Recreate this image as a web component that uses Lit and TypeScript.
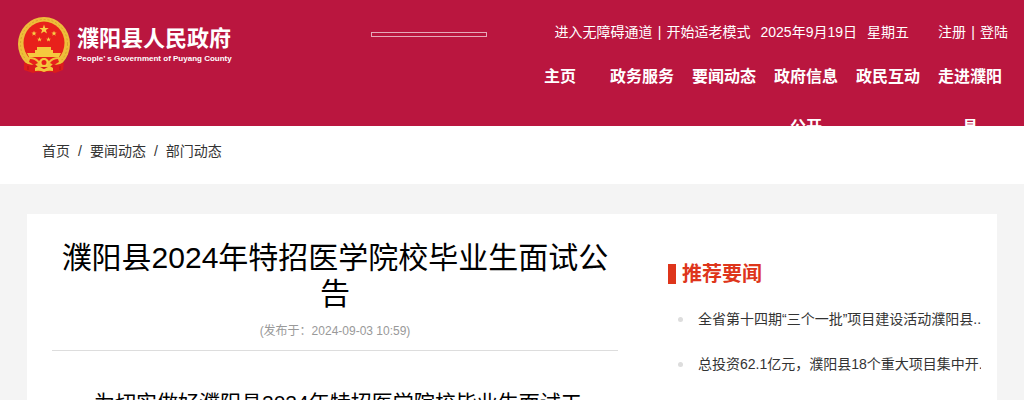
import { LitElement, html, css, svg } from "lit";
import { customElement, property } from "lit/decorators.js";

const STAR = "0,-10 2.4,-3.2 9.5,-3.1 3.8,1.2 5.9,8.1 0,4 -5.9,8.1 -3.8,1.2 -9.5,-3.1 -2.4,-3.2";
const star = (x: number, y: number, s: number) =>
  svg`<polygon points=${STAR} transform="translate(${x} ${y}) scale(${s})" fill="#f8d146"/>`;

@customElement("national-emblem")
export class NationalEmblem extends LitElement {
  static styles = css`
    :host { display: block; }
    svg { display: block; }
  `;
  render() {
    return html`<svg width="54" height="58" viewBox="0 0 54 58" aria-hidden="true">
      <ellipse cx="27" cy="28" rx="26" ry="27" fill="#eebd3a"/>
      <ellipse cx="27" cy="28" rx="23.5" ry="24.5" fill="none" stroke="#d9a02c" stroke-width="1" stroke-dasharray="2 2"/>
      <ellipse cx="27" cy="27" rx="20.5" ry="21.5" fill="#e8211b"/>
      ${star(27, 13.5, 0.5)}${star(17, 17.5, 0.28)}${star(37, 17.5, 0.28)}${star(22.5, 23.5, 0.26)}${star(31.5, 23.5, 0.26)}
      <path d="M20 31 H34 V34 H36 V37 H44 L42 41 H12 L10 37 H18 V34 H20 Z" fill="#f5c93e"/>
      <path d="M12 41 Q19 41 22 45 Q27 39 32 45 Q35 41 42 41 L46 46 L38 52 H16 L8 46 Z" fill="#f0c03a"/>
      <path d="M13 43 Q18 43 21 47 L17 49 L12 46 Z M41 43 Q36 43 33 47 L37 49 L42 46 Z" fill="#e8211b"/>
      <path d="M7 46 Q13 50 18 48 L21 51 H33 L36 48 Q41 50 47 46 L46 54 L38 57 L35 56 H19 L16 57 L7 54 Z" fill="#dc1c1c"/>
      <path d="M18 52 Q21 49 25 52 Q27 54 29 52 Q33 49 36 52 V55 Q31 54 27 56 Q23 54 18 55 Z" fill="#f3c53b"/>
      <circle cx="27" cy="46.500" r="3.500" fill="#e8211b" stroke="#f5c93e" stroke-width="2"/>
      <path d="M11 50 V54 M43 50 V54" stroke="#b81218" stroke-width="1"/>
    </svg>`;
  }
}

@customElement("site-header")
export class SiteHeader extends LitElement {
  static styles = css`
    :host { display: block; }
    .header {
      display: flex; box-sizing: border-box;
      height: 126px; overflow: hidden; background: #ba163f; color: #fff;
    }
    a { color: inherit; text-decoration: none; }
    .brand { display: flex; align-items: flex-start; gap: 6px; padding: 16px 0 0 17px; flex: none; }
    .brand-text { display: flex; flex-direction: column; padding-top: 9px; white-space: nowrap; }
    .name { font-size: 22px; line-height: 28px; font-weight: 700; }
    .english { font-size: 8px; line-height: 12px; font-weight: 700; }
    .search { margin: 0 32px 0 auto; padding-top: 32px; flex: none; }
    .search input {
      display: block; box-sizing: border-box; width: 116px; height: 5px; padding: 0;
      border: 1px solid #e6a9b9; background: transparent; color: #fff; font-size: 1px; outline: 0;
    }
    .right { flex: none; }
    .top { display: flex; justify-content: flex-end; padding: 22px 16px 0 0; font-size: 14px; line-height: 20px; white-space: nowrap; }
    .links, .date { display: flex; }
    .date { gap: 10px; padding: 0 29px 0 10px; }
    .bar { width: 14px; text-align: center; }
    nav { display: flex; padding: 10px 13px 0 0; font-size: 16px; line-height: 50px; font-weight: 700; text-align: center; }
    nav a { box-sizing: border-box; width: 82px; padding: 0 8px; }
  `;
  private items = ["主页", "政务服务", "要闻动态", "政府信息公开", "政民互动", "走进濮阳县"];
  render() {
    return html`<header class="header">
      <a class="brand" href="#">
        <national-emblem></national-emblem>
        <span class="brand-text">
          <span class="name">濮阳县人民政府</span>
          <span class="english">People’ s Government of Puyang County</span>
        </span>
      </a>
      <form class="search"><input type="text" aria-label="搜索" /></form>
      <div class="right">
        <div class="top">
          <span class="links"><a href="#">进入无障碍通道</a><span class="bar">|</span><a href="#">开始适老模式</a></span>
          <span class="date"><span>2025年9月19日</span><span>星期五</span></span>
          <span class="links"><a href="#">注册</a><span class="bar">|</span><a href="#">登陆</a></span>
        </div>
        <nav>${this.items.map((t) => html`<a href="#">${t}</a>`)}</nav>
      </div>
    </header>`;
  }
}

@customElement("news-list")
export class NewsList extends LitElement {
  static styles = css`
    :host { display: block; }
    h2 { display: flex; align-items: center; gap: 6px; margin: 0; color: #de351b; font-size: 20px; line-height: 30px; }
    h2::before { content: ""; width: 8px; height: 20px; background: #de351b; }
    ul { list-style: none; margin: 8px 0 0; padding: 0 0 0 10px; }
    li { display: flex; align-items: center; gap: 15px; height: 45px; }
    li::before { content: ""; flex: none; width: 5px; height: 5px; border-radius: 50%; background: #ddd; }
    a { min-width: 0; padding-bottom: 2px; color: #333; font-size: 14px; line-height: 20px; text-decoration: none; white-space: nowrap; overflow: hidden; }
  `;
  @property({ attribute: false }) items: string[] = [];
  render() {
    return html`<h2>推荐要闻</h2>
      <ul>${this.items.map((t) => html`<li><a href="#">${t}</a></li>`)}</ul>`;
  }
}

@customElement("app-root")
export class AppRoot extends LitElement {
  static styles = css`
    :host {
      display: block; height: 100vh; overflow: hidden; background: #f4f4f4; color: #000;
      font-family: "Liberation Sans", "Noto Sans CJK SC", sans-serif;
    }
    .crumbs { background: #fff; height: 58px; }
    .container { box-sizing: border-box; max-width: 970px; margin: 0 auto; }
    .crumbs ol {
      display: flex; list-style: none; padding: 15px 15px 0; font-size: 14px; line-height: 20px;
    }
    .crumbs a { color: #333; text-decoration: none; }
    .crumbs li + li::before { content: "/"; padding: 0 8px; color: #333; }
    .panel {
      display: grid; grid-template-columns: minmax(0, 566fr) minmax(0, 313fr); gap: 50px;
      margin-top: 30px; padding: 26px 16px 30px 25px; background: #fff;
    }
    h1 { margin: 0; font-size: 30px; line-height: 36px; font-weight: 400; text-align: center; }
    .meta {
      margin: 0; padding: 9px 0; border-bottom: 1px solid #ddd; color: #999;
      font-size: 12px; line-height: 20px; text-align: center;
    }
    .body { margin: 34px 0 0; text-indent: 2em; font-size: 21px; line-height: 36px; }
    .aside { padding-top: 19px; }
  `;
  private news = [
    "全省第十四期“三个一批”项目建设活动濮阳县...",
    "总投资62.1亿元，濮阳县18个重大项目集中开...",
  ];
  render() {
    return html`<site-header></site-header>
      <div class="crumbs">
        <ol class="container">
          <li><a href="#">首页</a></li><li><a href="#">要闻动态</a></li><li><a href="#">部门动态</a></li>
        </ol>
      </div>
      <main class="container panel">
        <article>
          <h1>濮阳县2024年特招医学院校毕业生面试公告</h1>
          <p class="meta">(发布于：2024-09-03 10:59)</p>
          <p class="body">为切实做好濮阳县2024年特招医学院校毕业生面试工作，</p>
        </article>
        <aside class="aside"><news-list .items=${this.news}></news-list></aside>
      </main>`;
  }
}
